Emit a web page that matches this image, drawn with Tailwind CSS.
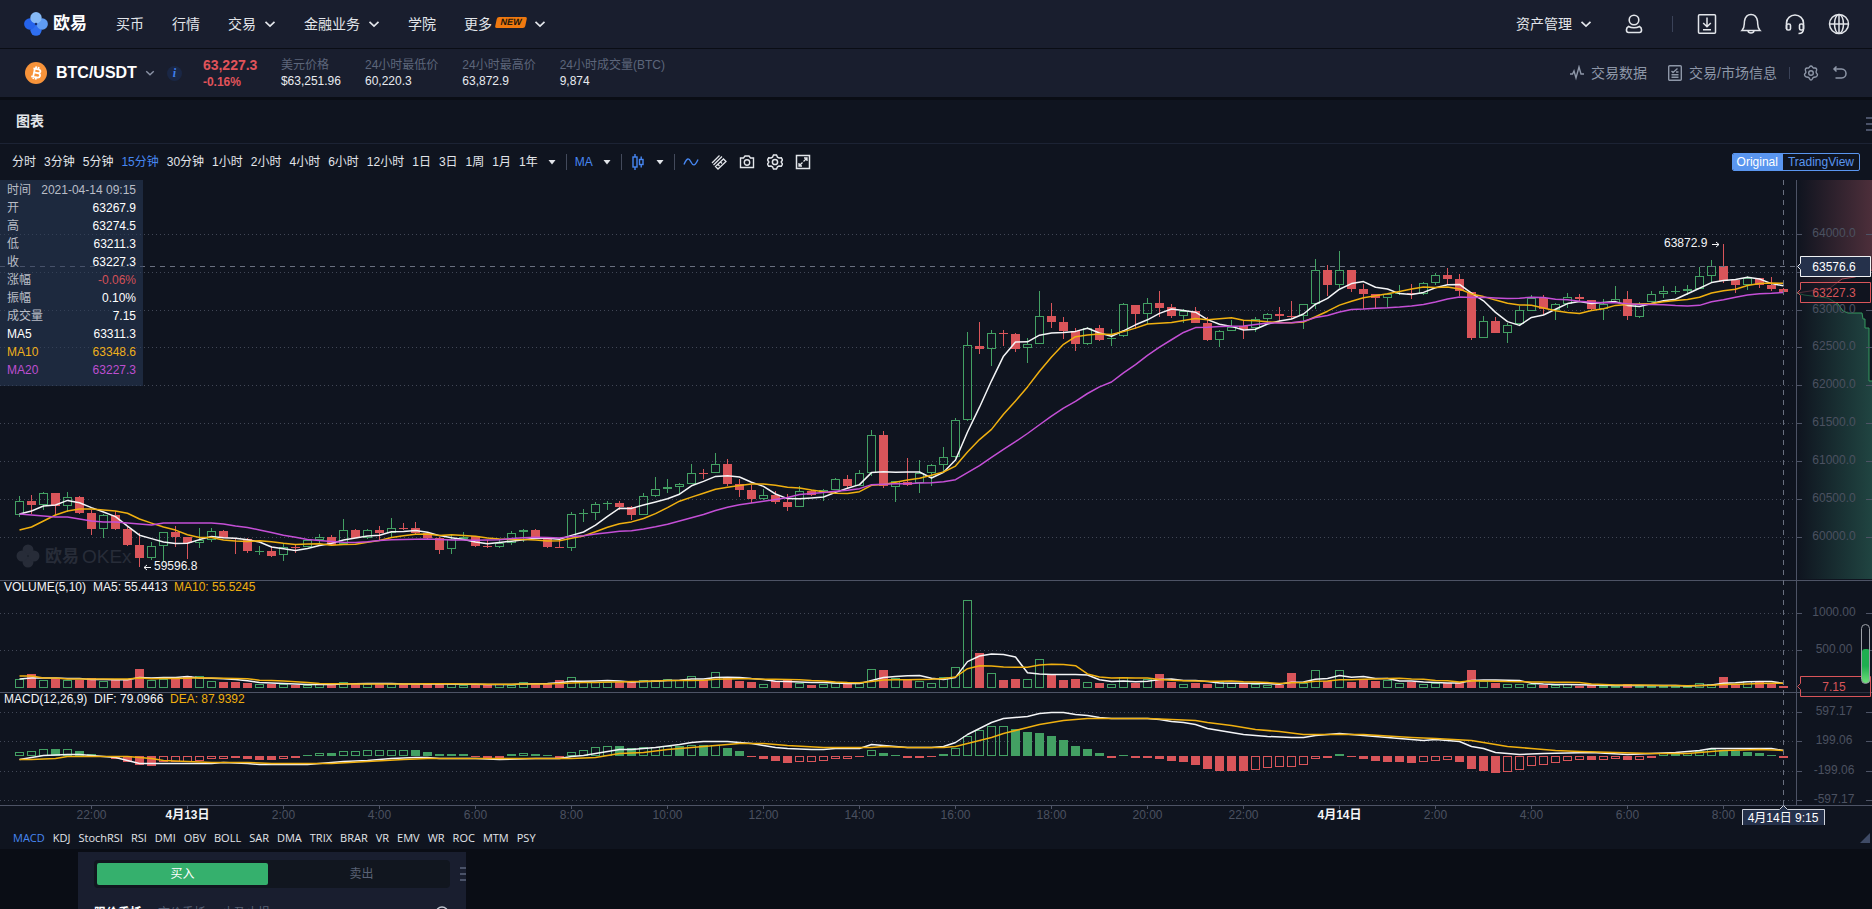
<!DOCTYPE html>
<html lang="zh-CN">
<head>
<meta charset="utf-8">
<title>BTC/USDT 欧易</title>
<script src="https://cdn.jsdelivr.net/npm/@tailwindcss/browser@4"></script>
</head>
<body class="bg-[#0a0d15] text-[#e2e5ea] font-['Liberation_Sans','Noto_Sans_CJK_SC',sans-serif] text-xs h-screen overflow-hidden flex flex-col">
<svg class="hidden">
  <symbol id="chev" viewBox="0 0 12 12"><path d="M1.5 3.8 6 8l4.500-4.200" fill="none" stroke="currentColor" stroke-width="1.700"/></symbol>
  <symbol id="caret" viewBox="0 0 8 8"><path d="M0.500 2h7L4 6.500z" fill="currentColor"/></symbol>
  <symbol id="bars" viewBox="0 0 6 16"><path d="M0 2h6M0 8h6M0 14h6" stroke="#4a5268" stroke-width="2"/></symbol>
</svg>

<header class="h-12 shrink-0 bg-[#191e2e] flex items-center justify-between pl-6 pr-[21px] text-sm">
  <div class="flex items-center">
    <a href="#" class="flex items-center gap-[5px] w-[92px] text-white font-bold text-[17px]">
      <svg class="w-6 h-6" viewBox="0 0 24 24"><circle cx="12" cy="18.200" r="5.600" fill="#2f6ff0"/><circle cx="5.800" cy="12" r="5.700" fill="#2563eb"/><circle cx="18.200" cy="12" r="5.700" fill="#5f9cf3"/><circle cx="12" cy="5.800" r="5.700" fill="#86b9f5"/><path d="M12 10.500 13.500 12 12 13.500 10.500 12z" fill="#152a6a"/></svg>
      <span>欧易</span></a>
    <nav class="flex items-center gap-7">
      <a href="#">买币</a>
      <a href="#">行情</a>
      <a href="#" class="flex items-center gap-2">交易<svg class="w-3 h-3"><use href="#chev"/></svg></a>
      <a href="#" class="flex items-center gap-2">金融业务<svg class="w-3 h-3"><use href="#chev"/></svg></a>
      <a href="#">学院</a>
      <a href="#" class="flex items-center gap-1">更多<span class="-skew-x-12 bg-[#f0790f] rounded-xs w-[30px] mb-1 text-center text-[#26180c] text-[9px] leading-[11px] font-bold">NEW</span><svg class="w-3 h-3 ml-1"><use href="#chev"/></svg></a>
    </nav>
  </div>
  <div class="flex items-center">
    <a href="#" class="flex items-center gap-2">资产管理<svg class="w-3 h-3"><use href="#chev"/></svg></a>
    <button aria-label="账户" class="ml-[30px]"><svg class="w-6 h-6" viewBox="0 0 24 24" fill="none" stroke="currentColor" stroke-width="1.600"><circle cx="12" cy="8" r="4.800"/><path d="M6.500 14.500c3 1.500 8 1.500 11 0 3 1.500 2.500 6 0 6h-11c-2.500 0-3-4.500 0-6z"/></svg></button>
    <span class="w-px h-4 bg-[#3a4258] ml-[26px] mr-[22px]"></span>
    <div class="flex items-center gap-5">
      <button aria-label="下载"><svg class="w-6 h-6" viewBox="0 0 24 24" fill="none" stroke="currentColor" stroke-width="1.500"><rect x="3.500" y="2.750" width="17" height="18.500" rx="1"/><path d="M12 5.500v9M8.200 11 12 14.700 15.800 11M8 17.700h8"/></svg></button>
      <button aria-label="通知"><svg class="w-6 h-6" viewBox="0 0 24 24" fill="none" stroke="currentColor" stroke-width="1.500"><path d="M3 18.500c3-3 2-6 2.500-9.500C6.300 4.500 9 2.500 12 2.500s5.700 2 6.500 6.500c.5 3.500-.5 6.500 2.500 9.500z"/><path d="M9 19c.5 2.500 5.500 2.500 6 0"/></svg></button>
      <button aria-label="客服"><svg class="w-6 h-6" viewBox="0 0 24 24" fill="none" stroke="currentColor" stroke-width="1.600"><path d="M3.500 17v-6a8.500 8 0 0 1 17 0v6M20.500 17c0 3.500-2 4.500-5 4.500"/><rect x="3.500" y="12" width="4" height="6" rx="1.500"/><rect x="16.500" y="12" width="4" height="6" rx="1.500"/></svg></button>
      <button aria-label="语言"><svg class="w-6 h-6" viewBox="0 0 24 24" fill="none" stroke="currentColor" stroke-width="1.500"><circle cx="12" cy="12" r="9.500"/><ellipse cx="12" cy="12" rx="4.500" ry="9.500"/><path d="M2.500 12h19M12 2.500v19"/></svg></button>
    </div>
  </div>
</header>

<section class="h-12 mt-px shrink-0 bg-[#191e2e] flex items-center justify-between px-6">
  <div class="flex items-center">
    <svg class="w-6 h-6" viewBox="0 0 24 24"><circle cx="12" cy="12" r="11" fill="#f7933a"/><path d="M8.500 8h5c3.500 0 3.200 3.800 0 3.800H10h4c3.500 0 3.300 4.400-.3 4.400H8M10 8v8M11 5.500V8M13.500 5.500V8M10.500 16v2.500M13 16v2.500" transform="rotate(12 12 12)" fill="none" stroke="#fff" stroke-width="1.800"/></svg>
    <button class="flex items-center gap-2 ml-2 text-base font-bold text-white">BTC/USDT<svg class="w-2.5 h-2.5 text-[#8b93a6]"><use href="#chev" width="10" height="10"/></svg></button>
    <button class="ml-3 w-[15px] h-[15px] rounded-full bg-[#1a2745] text-[#3f80ee] italic font-bold text-xs leading-[14px] font-['Liberation_Serif',serif]">i</button>
    <div class="ml-[21px] w-[78px] font-bold text-[#e0535a] leading-4"><div class="text-sm leading-[18px]">63,227.3</div><div>-0.16%</div></div>
    <dl class="flex gap-6 leading-4 text-[#5d667b] [&_dd]:text-[#e8ebf0]">
      <div class="min-w-[60px]"><dt>美元价格</dt><dd>$63,251.96</dd></div>
      <div><dt>24小时最低价</dt><dd>60,220.3</dd></div>
      <div><dt>24小时最高价</dt><dd>63,872.9</dd></div>
      <div><dt>24小时成交量(BTC)</dt><dd>9,874</dd></div>
    </dl>
  </div>
  <div class="flex items-center text-sm text-[#8e97a8]">
    <a href="#" class="flex items-center gap-[6px]"><svg class="w-4 h-4" viewBox="0 0 16 16" fill="none" stroke="currentColor" stroke-width="1.400"><path d="M1 9h2.500L5 6l2 7 3-11 2 7h3"/></svg>交易数据</a>
    <a href="#" class="flex items-center gap-[6px] ml-5"><svg class="w-4 h-4" viewBox="0 0 16 16" fill="none" stroke="currentColor" stroke-width="1.400"><rect x="1.700" y=".7" width="12.600" height="14.600" rx="1"/><path d="m4.500 6 1.500 1.500L10.500 3.500M9 7h2.500M4.500 9.700h7M4.500 12.200h7"/></svg>交易/市场信息</a>
    <span class="w-px h-3 bg-[#3a4258] mx-3"></span>
    <button aria-label="设置" class="ml-px"><svg class="w-4 h-4" viewBox="0 0 16 16" fill="none" stroke="currentColor" stroke-width="1.400"><path d="M8 1c1.500 0 1.500 1.700 2.500 2s2.300-.5 3 .8-.4 2-.4 3.200.7 1.500 1.200 2-.3 3-1.800 3-1.800 0-2.500.8S9.300 15 8 15s-1.300-1.400-2-2.200-1.300-.8-2.500-.8-2.500-2-1.800-3S3 8 2.900 7s-1.100-2-.4-3.200 2-.5 3-.8S6.500 1 8 1z"/><circle cx="8" cy="8" r="2.300"/></svg></button>
    <button aria-label="恢复" class="ml-[13px]"><svg class="w-4 h-4" viewBox="0 0 16 16" fill="none" stroke="currentColor" stroke-width="1.500"><path d="M4.500 1.500 2 4l2.500 2.500M2 4h7.500c6 0 6 9 0 9H3.500"/></svg></button>
  </div>
</section>

<main class="mt-[3px] bg-[#0f141f] shrink-0">
  <div class="h-11 border-b border-[#1c2334] flex items-center justify-between pl-4"><h2 class="text-sm font-bold text-[#e2e5ea] pb-0.5">图表</h2><svg class="w-1.5 h-4 mt-1"><use href="#bars"/></svg></div>

  <div class="h-9 flex items-center justify-between pl-3 pr-3">
    <div class="flex items-center gap-2">
      <div class="flex items-center gap-2">
        <button>分时</button><button>3分钟</button><button>5分钟</button><button class="text-[#4787f2]">15分钟</button><button>30分钟</button><button>1小时</button><button>2小时</button><button>4小时</button><button>6小时</button><button>12小时</button><button>1日</button><button>3日</button><button>1周</button><button>1月</button><button>1年</button>
      </div>
      <button aria-label="更多周期"><svg class="w-2 h-2 mx-0.5 block"><use href="#caret"/></svg></button>
      <span class="w-px h-4 bg-[#434a5b]"></span>
      <button class="flex items-center gap-[10px] text-[#4787f2]">MA<svg class="w-2 h-2 text-[#e2e5ea]"><use href="#caret"/></svg></button>
      <span class="w-px h-4 bg-[#434a5b] ml-0.5"></span>
      <button aria-label="K线样式" class="flex items-center gap-3 ml-0.5 text-[#4787f2]"><svg class="w-3 h-4" viewBox="0 0 12 16" fill="none" stroke="currentColor" stroke-width="1.400"><path d="M3 0v3M3 13v3M9.200 2.500v3M9.200 10.500v3"/><rect x="1" y="3" width="4" height="10"/><rect x="7.500" y="5.500" width="3.500" height="5"/></svg><svg class="w-2 h-2 text-[#e2e5ea]"><use href="#caret"/></svg></button>
      <span class="w-px h-4 bg-[#434a5b] ml-0.5"></span>
      <div class="flex items-center gap-3">
        <button aria-label="曲线" class="text-[#4787f2]"><svg class="w-4 h-4" viewBox="0 0 16 16" fill="none" stroke="currentColor" stroke-width="1.400"><path d="M1 10.500C4 3 6 4 8 8s4 4.500 7-2.500"/></svg></button>
        <button aria-label="画线"><svg class="w-4 h-4" viewBox="0 0 16 16" fill="none" stroke="currentColor" stroke-width="1.300"><path d="M1 9 8.500 1.500M2.500 11 11 2.500M4.500 12.500 12.500 5l2.500 2.500L7 15zM7 10.500l1.500 1.500M9.500 8l1.500 1.500"/></svg></button>
        <button aria-label="截图"><svg class="w-4 h-4" viewBox="0 0 16 16" fill="none" stroke="currentColor" stroke-width="1.400"><path d="M1.500 4h3L6 2h4l1.500 2h3v9.500h-13z"/><circle cx="8" cy="8.500" r="2.700"/></svg></button>
        <button aria-label="图表设置"><svg class="w-4 h-4" viewBox="0 0 16 16" fill="none" stroke="currentColor" stroke-width="1.500"><path d="M5.500 3.200 6.500 1h3l1 2.200 1.500.8 2.300-.2 1.200 2.200L14.200 8l1.300 2-1.200 2.200-2.300-.2-1.500.8-1 2.200h-3l-1-2.200L4 12l-2.300.2L.5 10l1.300-2L.5 6l1.200-2.200L4 4z"/><circle cx="8" cy="8" r="2.600"/></svg></button>
        <button aria-label="全屏"><svg class="w-4 h-4" viewBox="0 0 16 16" fill="none" stroke="currentColor" stroke-width="1.500"><rect x="1.500" y="1.500" width="13" height="13"/><path d="M8.500 7.500 12 4M9 4h3v3M7.500 8.500 4 12M4 9v3h3" stroke-width="1.300"/></svg></button>
      </div>
    </div>
    <div class="flex h-[18px] border border-[#5a96ef] rounded-xs leading-4 overflow-hidden">
      <button class="pl-1 pr-[5px] bg-[#5a96ef] text-white">Original</button><button class="px-[5px] text-[#5a96ef]">TradingView</button>
    </div>
  </div>

  <div class="relative">
    <svg id="chart" class="block w-full h-auto font-['Liberation_Sans','Noto_Sans_CJK_SC',sans-serif] text-xs" viewBox="0 180 1872 645">
      <defs>
        <linearGradient id="sell"><stop offset="0" stop-color="#5c3541" stop-opacity="0"/><stop offset="1" stop-color="#5c3541" stop-opacity=".8"/></linearGradient>
        <linearGradient id="buy"><stop offset="0" stop-color="#224a45" stop-opacity="0"/><stop offset="1" stop-color="#224a45" stop-opacity=".9"/></linearGradient>
        <linearGradient id="cap" x2="0" y2="1"><stop offset=".5" stop-color="#1fae50"/><stop offset="1" stop-color="#6fe07a"/></linearGradient>
      </defs>
      <g fill="#272c38">
        <circle cx="28" cy="550" r="5.500"/><circle cx="28" cy="562" r="5.500"/><circle cx="22" cy="556" r="5.500"/><circle cx="34" cy="556" r="5.500"/>
        <text x="45" y="562" font-size="17" font-weight="700">欧易</text><text x="82" y="563" font-size="19">OKEx</text>
      </g>
      <path d="M1797 180h75v90l-17 7-13 2-12 9-33 5z" fill="url(#sell)"/>
      <path d="M1797 293l7 2 24 3 10 6 5 7 5 2h14l1 6h2v9h4v53h3v198h-75z" fill="url(#buy)"/>
      <path d="M1797 293l33-5 12-9 13-2 17-7" fill="none" stroke="#a04a54"/>
      <path d="M1797 293l7 2 24 3 10 6 5 7 5 2h14l1 6h2v9h4v53h3" fill="none" stroke="#359a5e"/>
      <g id="plot"></g>
    </svg>
    <table class="absolute left-0 top-0 w-[143px] h-[206px] bg-[#2a3a58]/55 text-[#b9bdc6] leading-[18px] [&_td]:text-right [&_td]:pr-[7px] [&_th]:pl-[7px] [&_th]:text-left [&_th]:font-normal [&_td]:text-white">
      <tbody class="block pt-px">
      <tr class="flex justify-between"><th>时间</th><td><span class="text-[#b9bdc6]">2021-04-14 09:15</span></td></tr>
      <tr class="flex justify-between"><th>开</th><td>63267.9</td></tr>
      <tr class="flex justify-between"><th>高</th><td>63274.5</td></tr>
      <tr class="flex justify-between"><th>低</th><td>63211.3</td></tr>
      <tr class="flex justify-between"><th>收</th><td>63227.3</td></tr>
      <tr class="flex justify-between"><th>涨幅</th><td><span class="text-[#d25058]">-0.06%</span></td></tr>
      <tr class="flex justify-between"><th>振幅</th><td>0.10%</td></tr>
      <tr class="flex justify-between"><th>成交量</th><td>7.15</td></tr>
      <tr class="flex justify-between"><th><span class="text-white">MA5</span></th><td>63311.3</td></tr>
      <tr class="flex justify-between"><th><span class="text-[#eeb01c]">MA10</span></th><td><span class="text-[#eeb01c]">63348.6</span></td></tr>
      <tr class="flex justify-between"><th><span class="text-[#be4fd0]">MA20</span></th><td><span class="text-[#be4fd0]">63227.3</span></td></tr>
      </tbody>
    </table>
  </div>

  <div class="h-6 flex items-center justify-between pl-[13px] pr-0.5 pt-0.5">
    <div class="flex gap-2 text-[11px] font-['Open_Sans',sans-serif]">
      <button class="text-[#4787f2]">MACD</button><button>KDJ</button><button>StochRSI</button><button>RSI</button><button>DMI</button><button>OBV</button><button>BOLL</button><button>SAR</button><button>DMA</button><button>TRIX</button><button>BRAR</button><button>VR</button><button>EMV</button><button>WR</button><button>ROC</button><button>MTM</button><button>PSY</button>
    </div>
    <svg class="w-2.5 h-2.5" viewBox="0 0 10 10"><path d="M10 0v10H0z" fill="#3f4b66"/></svg>
  </div>
</main>

<section class="mt-[3px] ml-[78px] w-[388px] shrink-0 bg-[#191e2f] pl-4 pt-2">
  <div class="flex items-center justify-between">
    <div class="flex w-[356px] h-7 p-[3px] bg-[#11161f] rounded">
      <button class="w-[171px] bg-[#35b06d] rounded-xs text-white">买入</button>
      <button class="flex-1 pl-2 text-[#5a6275]">卖出</button>
    </div>
    <svg class="w-1.5 h-4"><use href="#bars"/></svg>
  </div>
  <div class="mt-[17px] pr-4 flex items-start justify-between text-[#5a6275] leading-4">
    <div class="flex gap-4"><button class="font-bold text-white">限价委托</button><button>市价委托</button><button>止盈止损</button></div>
    <button aria-label="说明"><svg class="w-4 h-4 block" viewBox="0 0 16 16" fill="none" stroke="#c0c5cf" stroke-width="1.500"><circle cx="8" cy="8" r="6"/></svg></button>
  </div>
</section>

<script>
const GREEN = '#43a063', RED = '#d9555a', WHITE = '#f4f5f7', GOLD = '#f0b010', PINK = '#c44fd6';
const AXIS = '#4d5365', LABEL = '#4b5160';
const STEP = 12, X0 = 19.5;
const px = i => X0 + STEP * i;
// Each candle: direction, high, body top, body bottom, low; every block has its own vertical origin.
const blocks = [
[450, 'g46,51,65,67 r45,51,55,64 g42,43,55,60 r43,43,56,65 g42,47,56,62 r46,47,63,64 r60,63,79,85 g64,65,79,88 r61,65,79,80 r77,79,95,96 r83,95,108,117 g92,96,108,110 g82,82,96,111 r76,82,87,97 r87,87,93,109 g78,90,93,98 g78,81,90,92 r80,81,88,88 r88,88,89,104 r88,89,101,103 g96,101,102,105 r96,101,106,107 g93,97,105,111 r94,97,98,103 g89,90,97,97 g84,87,90,93 r85,87,95,96 g69,80,94,95 r79,80,88,88 g79,80,88,89 r76,80,83,90 g68,78,83,88 r73,78,79,80 r72,78,83,84 r83,83,88,89 r87,88,100,104 g84,89,99,104 g82,87,89,90 r86,86,96,97'],
[400, 'r140,146,147,148 g139,143,147,148 g131,133,143,145 g129,130,132,142 r129,130,138,139 r138,139,147,148 r139,147,148,148 g112,114,148,151 g109,113,114,122 g102,104,113,120 g101,103,104,110 r101,103,107,110 r106,107,115,120 g93,96,115,115 g77,89,96,97 g79,87,89,93 g83,84,87,94 g64,73,84,84 r69,73,74,79 g53,64,73,73 r59,64,84,86 r79,84,90,97 r85,90,99,103 g89,95,99,100 r91,95,102,104 r94,102,107,111 g86,91,107,107 r90,91,95,96 g89,90,93,101 g78,79,90,90 r75,79,86,88 g70,73,86,86 g30,35,73,76 r31,35,86,88 g81,81,87,102 r58,82,85,86 g60,73,83,93 g64,65,73,86 g47,57,65,72'],
[240, 'g178,180,217,218 g92,105,180,181 r82,106,109,114 g90,93,109,126 r90,93,94,106 r93,94,109,112 g98,104,108,123 g51,76,104,104 r63,76,82,88 r77,82,91,99 r88,91,104,111 g87,88,104,105 r85,88,100,101 g89,98,99,106 g63,64,96,97 r65,65,74,89 g58,63,74,84 r51,63,68,77 r64,67,76,78 g69,71,76,83 r67,71,83,83 r77,83,100,101 g90,91,100,107 g80,87,91,91 r81,86,89,99 g77,79,88,92 g73,74,79,83 r67,74,76,81 r61,76,77,79 g64,64,76,89 g19,30,64,69 r25,30,45,56 g11,30,45,48 r30,30,49,52 r44,49,54,69 r54,54,58,68 g53,54,58,68 g45,53,54,55'],
[170, 'r114,123,124,129 g112,113,124,125 g103,105,113,115 r98,105,109,114 r104,109,121,126 r122,122,168,170 g146,151,168,168 r147,151,163,163 g153,155,163,173 g136,140,154,155 g125,128,141,141 r125,128,139,145 g133,134,140,150 g123,127,134,138 r124,127,129,132 r130,130,139,140 g129,134,139,150 g116,129,133,133 r121,129,146,150 g132,134,147,148 g121,124,132,132 g116,121,124,128 g116,121,122,124 g115,119,121,125 g97,106,119,119 g90,96,106,112 r74,96,111,113 r110,110,115,123 g106,108,115,120 r108,108,115,118 r107,115,119,121 r118,119,122,122']
];
const candles = blocks.flatMap(([y, s]) => s.split(' ').map(t => [t[0] === 'g', ...t.slice(1).split(',').map(v => +v + y)]));
const volumes = [9,14,8,9,8,8,10,7,8,8,19,8,9,9,12,12,7,6,6,5,4,4,4,3,3,4,4,6,4,4,4,4,4,4,4,4,4,3,4,3,4,3,6,5,4,8,11,6,6,6,6,6,8,8,9,8,12,8,16,10,7,6,4,7,8,5,3,4,5,5,5,19,18,10,9,7,5,11,21,88,35,15,8,9,9,29,13,8,9,6,5,4,11,5,9,14,6,4,5,4,6,5,4,4,3,3,15,5,18,7,18,6,9,7,8,5,6,4,5,5,5,18,7,5,4,4,4,3,3,4,2,3,2,2,4,2,2,2,2,2,5,4,11,4,7,6,4,2];
const macd = [4,5,7,6.8,7,5,2,0,-3,-6,-9,-10,-6,-5.800,-5.600,-5,-3,-2.800,-2,-3,-4,-4.100,-3,-2,1,3,2.800,5,5.100,6,6.100,6.200,6.300,6,4,2,2,2,-1,-2,-2,2,3,2,1,-2,4,6,9,10,9.800,8,9,9.100,10,9.600,11,10.600,11,8,5,-1,-3,-5,-7,-6,-5.900,-5,-3,-2.900,-1,6,3,1,-2,-2,-1,2,8,20,26,30,30.100,27,24,23,20,16,10,7,3,-2,1,-2,-2,-3,-5,-6,-9,-13,-15,-15,-15,-14,-12,-11,-10.900,-9,-3,-2,2,-1,-3,-5,-6,-6.100,-7,-6,-5,-4,-6,-13,-15,-17,-16,-14,-10,-9,-7,-5,-4,-4.200,-4,-3,-4,-3.900,-2,3,3,3.100,5,7,5,5,4,3,1,-2];
// Sparse [index, y] pairs of the two MACD lines
const dif = '0,759 1,757 2,755 4,754 5,754 7,756 8,757 9,760 10,763 11,763 16,763 17,762 19,763 20,764 24,764 25,763 27,761 29,760 31,758 33,757 34,757 35,758 38,758 40,759 43,758 45,758 46,756 47,755 48,753 49,751 50,749 51,749 52,748 53,747 55,744 56,742 57,741 58,741 59,741 61,743 62,745 63,747 64,748 66,749 67,749 68,748 70,748 71,744 73,746 74,747 76,747 77,746 78,742 79,734 80,728 81,722 82,718 84,716 85,713 86,712 87,712 88,714 89,715 90,717 91,718 94,718 95,719 96,721 97,722 98,724 99,728 101,732 102,734 104,736 106,737 107,737 108,735 110,733 112,735 114,737 116,739 117,740 118,739 120,741 121,746 122,748 123,752 125,754 127,753 131,752 134,754 136,753 138,752 140,750 141,748 146,748 147,750';
const dea = '0,759 1,759 3,758 4,756 9,756 11,758 12,760 14,761 16,762 19,762 21,763 26,763 29,761 32,759 34,758 46,758 48,757 49,755 50,753 52,752 54,749 56,747 58,745 60,743 62,743 64,745 67,747 71,747 72,746 74,747 77,747 78,746 79,743 80,740 81,737 82,733 84,727 85,724 87,720 89,718 94,718 98,720 99,722 101,725 103,729 105,731 107,734 112,734 116,737 118,738 121,740 122,742 124,746 126,748 128,750 130,751 133,752 136,753 139,753 141,751 142,750 145,749 147,750';

const out = [];
const hline = (y, a, b, c, dash = '') => out.push(`<path d="M${a} ${y + .5}H${b}" stroke="${c}" ${dash && `stroke-dasharray="${dash}"`}/>`);
const vline = (x, a, b, c, dash = '') => out.push(`<path d="M${x + .5} ${a}V${b}" stroke="${c}" ${dash && `stroke-dasharray="${dash}"`}/>`);
const text = (x, y, s, c, anchor = 'middle', weight = 400) => out.push(`<text x="${x}" y="${y}" fill="${c}" text-anchor="${anchor}" font-weight="${weight}">${s}</text>`);
const box = (i, top, h, color, hollow) => out.push(hollow && h > 2
  ? `<rect x="${px(i) - 4}" y="${top + .5}" width="8" height="${h - 1}" fill="none" stroke="${color}"/>`
  : `<rect x="${px(i) - 4.5}" y="${top}" width="9" height="${Math.max(h, 1)}" fill="${color}"/>`);
const line = (pts, c) => out.push(`<polyline points="${pts.map(p => p.join()).join(' ')}" fill="none" stroke="${c}" stroke-width="1.500" stroke-linejoin="round"/>`);
const average = (data, n, seed) => data.map((_, i) => i < n - 1 ? seed[i] : data.slice(i - n + 1, i + 1).reduce((a, b) => a + b) / n);

const grid = [[234,'64000.0'],[272,''],[310,'63000.0'],[347,'62500.0'],[385,'62000.0'],[423,'61500.0'],[461,'61000.0'],[499,'60500.0'],[537,'60000.0'],[613,'1000.00'],[650,'500.00'],[712,'597.17'],[741,'199.06'],[771,'-199.06'],[800,'-597.17']];
for (const [y, s] of grid) {
  hline(y, 0, 1796, '#414756', '1 3');
  hline(y, 1797, 1802, AXIS); hline(y, 1866, 1872, AXIS);
  if (s) text(1834, y + 3, s, LABEL);
}
[580, 692, 805].forEach(y => hline(y, 0, 1872, AXIS));
vline(1796, 180, 805, AXIS);

candles.forEach(([up, hi, top, bottom, lo], i) => {
  const c = up ? GREEN : RED, x = px(i) - .5;
  vline(x, hi, top, c); vline(x, bottom, lo, c);
  box(i, top, bottom - top, c, up);
  box(i, 688 - volumes[i], volumes[i], c, up);
});
macd.forEach((v, i) => {
  const h = Math.round(Math.abs(v));
  if (h) box(i, v > 0 ? 756 - h : 756, h, v > 0 ? GREEN : RED, i === 0 || v > macd[i - 1]);
});
const closes = candles.map(c => c[0] ? c[2] : c[3]);
const curve = (ys, c) => line(ys.map((y, i) => [px(i), y]), c);
curve(average(closes, 5, [514,511,506,505]), WHITE);
curve(average(closes, 10, [530,527,521,515,511,509,509,510,511]), GOLD);
curve(average(closes, 20, [514,515,516,517,517,519,521,522,522,523,524,525,523,523,523,523,523,524,526]), PINK);
curve(average(volumes, 5, [9,10,10,10]).map(v => 688 - v), WHITE);
curve(average(volumes, 10, [12,12,10,10,9,9,9,9,9]).map(v => 688 - v), GOLD);
const sparse = s => s.split(' ').map(p => p.split(',')).map(([i, y]) => [px(+i), +y + .5]);
line(sparse(dif), WHITE); line(sparse(dea), GOLD);

['22:00','4月13日','2:00','4:00','6:00','8:00','10:00','12:00','14:00','16:00','18:00','20:00','22:00','4月14日','2:00','4:00','6:00','8:00'].forEach((s, k) => {
  const x = px(6 + 8 * k), day = s.includes('月');
  vline(x - .5, 806, 809, AXIS);
  text(x, 819, s, day ? WHITE : LABEL, 'middle', day ? 700 : 400);
});

text(4, 591, 'VOLUME(5,10)', WHITE, 'start'); text(93, 591, 'MA5: 55.4413', WHITE, 'start'); text(174, 591, 'MA10: 55.5245', GOLD, 'start');
text(4, 703, 'MACD(12,26,9)', WHITE, 'start'); text(94, 703, 'DIF: 79.0966', WHITE, 'start'); text(170, 703, 'DEA: 87.9392', GOLD, 'start');
const arrow = d => out.push(`<path d="${d}" fill="none" stroke="${WHITE}"/>`);
text(154, 570, '59596.8', WHITE, 'start'); arrow('M151 567.5h-7M147 565l-3 2.500 3 2.500');
text(1664, 247, '63872.9', WHITE, 'start'); arrow('M1712 244.500h7M1716 242l3 2.500-3 2.500');

hline(266, 0, 1796, '#6a7080', '5 5');
vline(1783, 180, 805, '#6a7080', '5 5');
const tag = (y, s, c, fill, tc) => {
  out.push(`<path d="M1800.500 ${y - 10}h70v20h-70v-7l-3-3 3-3z" fill="${fill}" stroke="${c}"/>`);
  text(1834, y + 4, s, tc);
};
tag(292.5, '63227.3', '#d9555a', '#10151f88', '#d9555a');
tag(266.5, '63576.6', '#f0f2f4', '#25314b', '#ffffff');
tag(686.5, '7.15', '#d9555a', '#10151f88', '#d9555a');
out.push(`<path d="M1742.500 809.500h37l4-4 4 4h37v16h-82z" fill="#25314b" stroke="#d0d4dc"/>`);
text(1783, 822, '4月14日 9:15', '#fff', 'middle');
out.push(`<rect x="1862" y="649" width="8" height="34" rx="3" fill="url(#cap)"/><rect x="1861.500" y="624.500" width="8" height="59" rx="4" fill="none" stroke="#9da1a8"/>`);
document.getElementById('plot').innerHTML = out.join('');
</script>
</body>
</html>
